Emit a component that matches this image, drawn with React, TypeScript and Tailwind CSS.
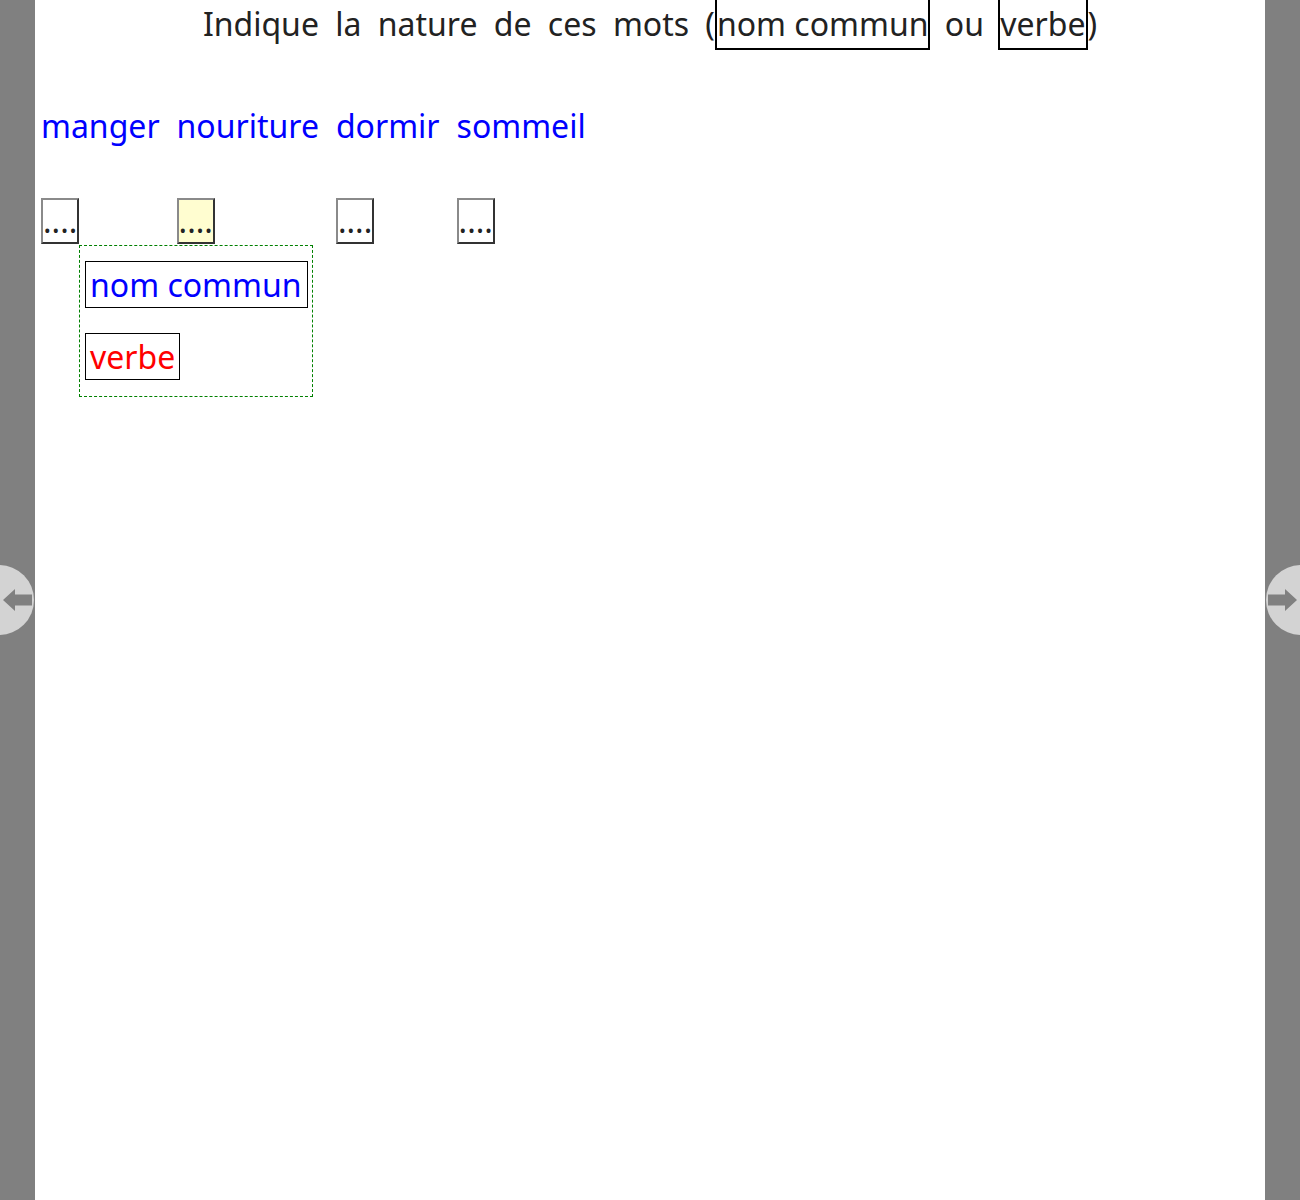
import React from 'react';

const words = ['manger', 'nouriture', 'dormir', 'sommeil'];

function Blank({ active }: { active?: boolean }) {
  return (
    <span
      className={
        'inline-block border-2 border-solid border-t-[#8a8a8a] border-l-[#8a8a8a] border-r-[#333] border-b-[#333] text-[#222] leading-[42px] ' +
        (active ? 'bg-[#fffdd0]' : 'bg-white')
      }
    >
      ....
    </span>
  );
}

function SideArrow({ dir }: { dir: 'left' | 'right' }) {
  return (
    <svg width="35" height="70" viewBox="0 0 35 70" className="absolute top-[565px] left-0">
      {dir === 'left' ? (
        <>
          <circle cx="-1" cy="35" r="35" fill="#d3d3d3" />
          <polygon points="3,35 15,24 15,29.5 32,29.5 32,40.5 15,40.5 15,46" fill="#808080" />
        </>
      ) : (
        <>
          <circle cx="36" cy="35" r="35" fill="#d3d3d3" />
          <polygon points="3,29.5 20,29.5 20,24 32,35 20,46 20,40.5 3,40.5" fill="#808080" />
        </>
      )}
    </svg>
  );
}

export default function App() {
  return (
    <div className="flex h-[1200px] w-full overflow-hidden font-['Noto_Sans',sans-serif] text-[32px]">
      <div className="relative w-[35px] shrink-0 bg-[#808080]">
        <SideArrow dir="left" />
      </div>

      <div className="relative flex-1 bg-white px-[6px]">
        {/* Consigne */}
        <div className="text-center text-[#222] leading-[48px]">
          <span className="[word-spacing:8px]">Indique la nature de ces mots (</span>
          <span className="inline-block border-x-2 border-b-2 border-black leading-[48px]">nom commun</span>
          <span className="[word-spacing:6px]"> ou </span>
          <span className="inline-block border-x-2 border-b-2 border-black leading-[48px]">verbe</span>)
        </div>

        {/* Mots + cases */}
        <div className="mt-[54px] flex gap-[17px]">
          {words.map((w, i) => (
            <div key={w} className="flex flex-col items-start">
              <span className="text-[#0000ff] leading-[43px]">{w}</span>
              <div className="mt-[50px]">
                <Blank active={i === 1} />
              </div>
            </div>
          ))}
        </div>

        {/* Liste deroulante */}
        <div className="absolute left-[44px] top-[245px] flex w-[234px] flex-col items-start gap-[25px] border border-dashed border-[#008000] px-[5px] pt-[15px] pb-[16px]">
          <span className="whitespace-nowrap border border-black pl-[4px] pr-[5px] leading-[45px] text-[#0000ff]">nom commun</span>
          <span className="whitespace-nowrap border border-black pl-[4px] pr-[4px] leading-[45px] text-[#ff0000]">verbe</span>
        </div>
      </div>

      <div className="relative w-[35px] shrink-0 bg-[#808080]">
        <SideArrow dir="right" />
      </div>
    </div>
  );
}
